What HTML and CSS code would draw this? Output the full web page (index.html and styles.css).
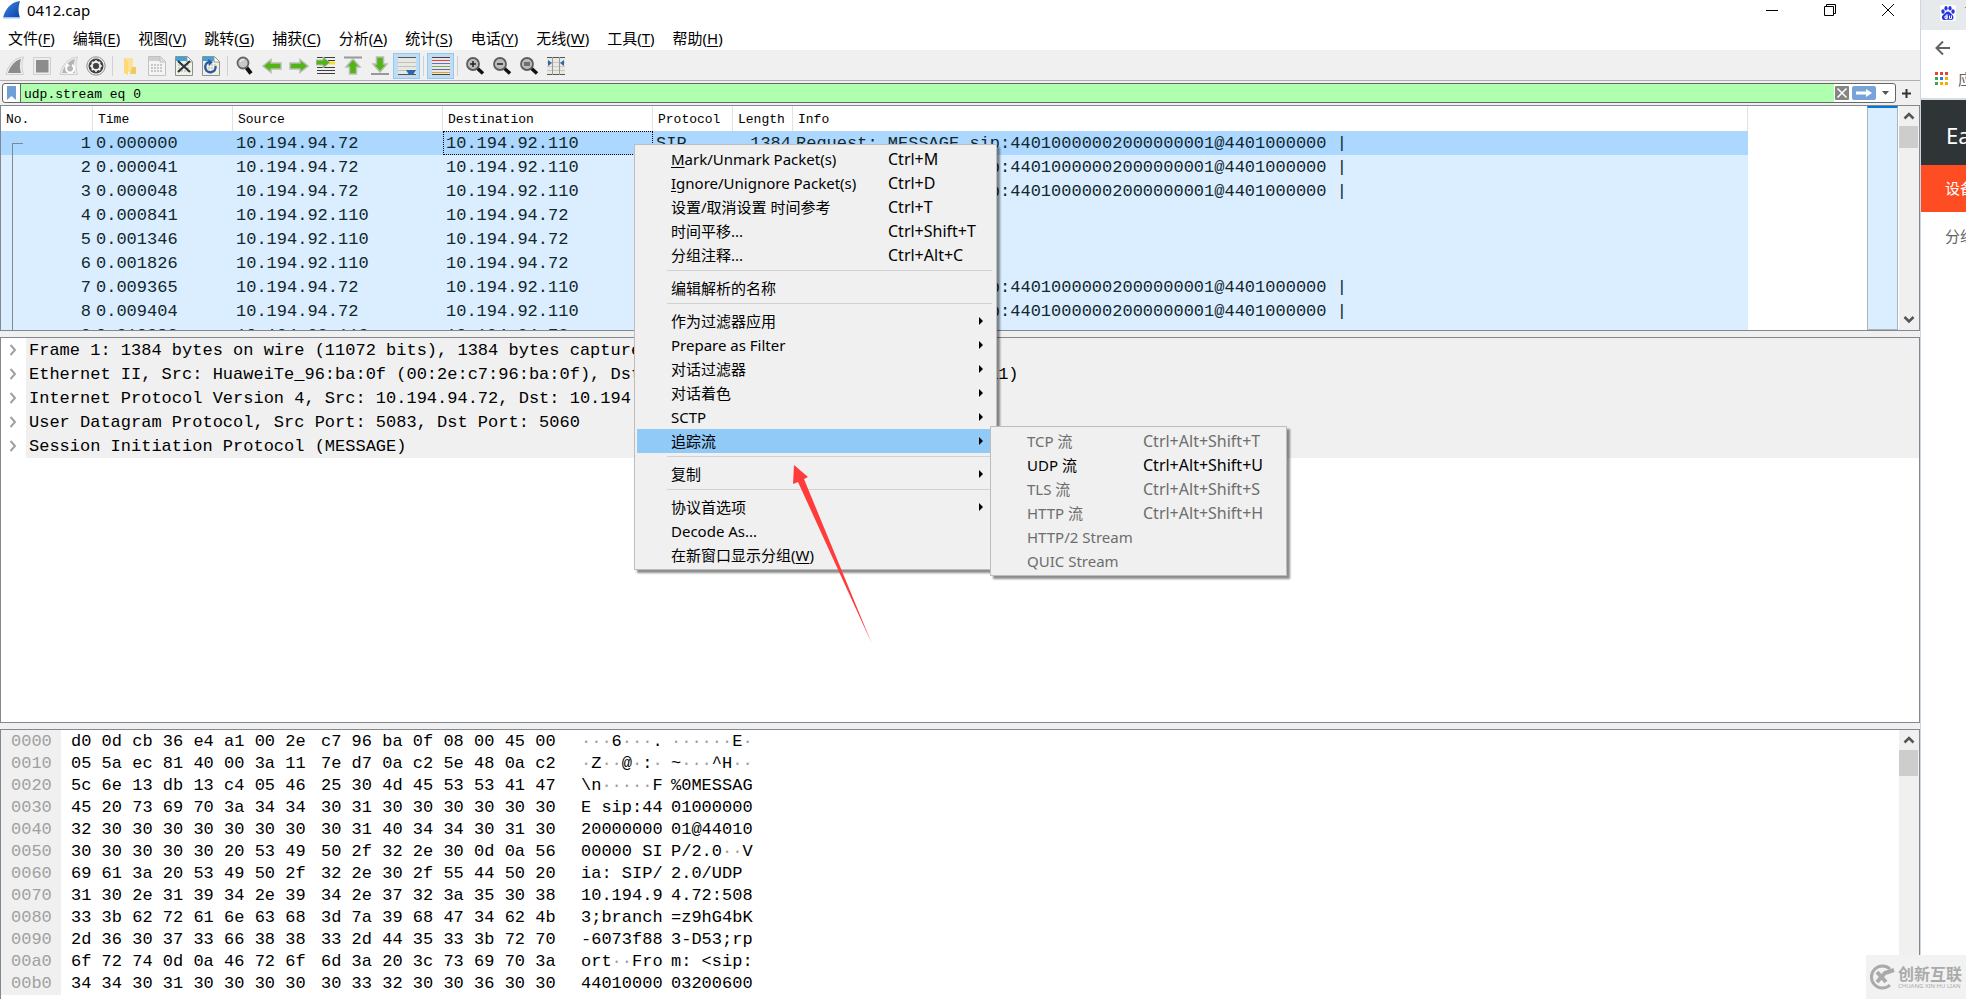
FILE: index.html
```html
<!DOCTYPE html>
<html lang="zh-CN">
<head>
<meta charset="utf-8">
<title>0412.cap</title>
<link rel="stylesheet" href="styles.css">
</head>
<body>
<main class="app">
  <header class="titlebar">
    <svg class="app-icon" width="20" height="20" viewBox="0 0 20 20" aria-hidden="true"><defs><linearGradient id="fin" x1="0" y1="0" x2="1" y2="1"><stop offset="0" stop-color="#3f8be8"/><stop offset="1" stop-color="#0a3fa6"/></linearGradient></defs><path d="M1 18C3 9 9 2 18 1c-2 6-2 11 0 17z" fill="url(#fin)"/><path d="M1 17h17v1.500H1z" fill="#9cc3f5"/></svg>
    <h1 class="title">0412.cap</h1>
    <div class="window-buttons">
      <button aria-label="最小化"><svg width="14" height="14" viewBox="0 0 14 14"><path d="M1 7.500h12" stroke="#000" fill="none"/></svg></button>
      <button aria-label="还原"><svg width="14" height="14" viewBox="0 0 14 14"><path d="M1.500 3.500h9v9h-9zM3.500 3V1.500h9v9H11" stroke="#000" fill="none"/></svg></button>
      <button aria-label="关闭"><svg width="14" height="14" viewBox="0 0 14 14"><path d="M1 1l12 12M13 1L1 13" stroke="#000" fill="none"/></svg></button>
    </div>
  </header>
  <nav class="menubar">
    <button>文件(<u>F</u>)</button><button>编辑(<u>E</u>)</button><button>视图(<u>V</u>)</button><button>跳转(<u>G</u>)</button><button>捕获(<u>C</u>)</button><button>分析(<u>A</u>)</button><button>统计(<u>S</u>)</button><button>电话(<u>Y</u>)</button><button>无线(<u>W</u>)</button><button>工具(<u>T</u>)</button><button>帮助(<u>H</u>)</button>
  </nav>
  <div class="toolbar">
    <button aria-label="开始捕获"><svg width="20" height="20" viewBox="0 0 20 20"><path d="M1 18.500C3 9 9 2 18.500 1c-2 6-2 11 0 17.500z" fill="#eee" stroke="#cfcfcf"/><path d="M3 17C5 10 10 4.500 16 3c-1.500 5-1.500 9 0 14z" fill="#8c8c8c"/></svg></button>
    <button aria-label="停止捕获"><svg width="20" height="20" viewBox="0 0 20 20"><path d="M1.500 1.500h17v17h-17z" fill="#eee" stroke="#cfcfcf"/><path d="M4 4h12.500v12.500H4z" fill="#8c8c8c"/></svg></button>
    <button aria-label="重新捕获"><svg width="20" height="20" viewBox="0 0 20 20"><path d="M1 18.500C3 9 9 2 18.500 1c-2 6-2 11 0 17.500z" fill="#eee" stroke="#cfcfcf"/><path d="M3 17C5 10 10 4.500 16 3c-1.500 5-1.500 9 0 14z" fill="#b5b5b5"/><path d="M8 10a4 4 0 1 0 5-1" fill="none" stroke="#fff" stroke-width="2"/><path d="M6 11l2-4 3 3z" fill="#fff"/></svg></button>
    <button aria-label="捕获选项"><svg width="20" height="20" viewBox="0 0 20 20"><circle cx="10" cy="10" r="9.200" fill="#eee" stroke="#8f8f8f"/><circle cx="10" cy="10" r="7.500" fill="#404040"/><circle cx="10" cy="10" r="4.200" fill="none" stroke="#eee" stroke-width="1.800"/><path d="M10 4v12M4 10h12M5.800 5.800l8.400 8.400M14.200 5.800l-8.400 8.400" stroke="#eee" stroke-width="1.500"/><circle cx="10" cy="10" r="3" fill="#404040"/></svg></button>
    <span class="sep"></span>
    <button aria-label="打开"><svg width="20" height="20" viewBox="0 0 20 20"><path d="M4 2h9v14H4z" fill="#fbe29b"/><path d="M12 11h4v7h-6z" fill="#f2c95c"/><path d="M4 2l4 3v14l-4-2z" fill="#ffd978"/></svg></button>
    <button aria-label="保存"><svg width="20" height="20" viewBox="0 0 20 20"><path d="M1.500.500h12l5 5v14h-17z" fill="#f4f4f4" stroke="#c2c2c2"/><path d="M2 1h11v4H2z" fill="#cfcfcf"/><path d="M13 1v5h5" fill="#ddd" stroke="#c2c2c2"/><path d="M4 9h12M4 12h12M4 15h12" stroke="#c8c8c8" stroke-width="2" stroke-dasharray="2 1"/></svg></button>
    <button aria-label="关闭文件"><svg width="20" height="20" viewBox="0 0 20 20"><path d="M1.500.500h12l5 5v14h-17z" fill="#f0f1e6" stroke="#8f918c"/><path d="M2 1h11v4H2z" fill="#3aa4dc"/><path d="M13 1v5h5" fill="#fff" stroke="#9a9a9a"/><path d="M4 9h12M4 12h12M4 15h12" stroke="#c4c7bb" stroke-width="1.500" stroke-dasharray="2 1"/><path d="M4 5l12 11M16 5L4 16" stroke="#2d333b" stroke-width="2.200"/></svg></button>
    <button aria-label="重新加载"><svg width="20" height="20" viewBox="0 0 20 20"><path d="M1.500.500h12l5 5v14h-17z" fill="#f0f1e6" stroke="#8f918c"/><path d="M2 1h11v4H2z" fill="#3aa4dc"/><path d="M13 1v5h5" fill="#fff" stroke="#9a9a9a"/><path d="M4 9h12M4 12h12M4 15h12" stroke="#c4c7bb" stroke-width="1.500" stroke-dasharray="2 1"/><path d="M8 6a5.200 5.200 0 1 0 6.500 4" fill="none" stroke="#2c5aa0" stroke-width="2.400"/><path d="M7 3l5 3-4 4z" fill="#2c5aa0"/></svg></button>
    <span class="sep"></span>
    <button aria-label="查找"><svg width="20" height="20" viewBox="0 0 20 20"><path d="M11 11l5 6.500" stroke="#111" stroke-width="4"/><circle cx="8" cy="7" r="5.500" fill="#c9c9c9" stroke="#666" stroke-width="1.800"/><path d="M5 6a3.500 3.500 0 0 1 4-2.500" stroke="#fff" fill="none"/></svg></button>
    <button aria-label="上一分组"><svg width="20" height="20" viewBox="0 0 20 20"><path d="M1 10l8-6.500V7h10v6H9v3.500z" fill="#52b515" stroke="#b9bdb5" stroke-width="1.500"/></svg></button>
    <button aria-label="下一分组"><svg width="20" height="20" viewBox="0 0 20 20"><path d="M19 10l-8-6.500V7H1v6h10v3.500z" fill="#52b515" stroke="#b9bdb5" stroke-width="1.500"/></svg></button>
    <button aria-label="转到分组"><svg width="20" height="20" viewBox="0 0 20 20"><path d="M1 1.500h18M1 11.500h18M1 14.500h18M1 17.500h18M12 4.500h7" stroke="#3d3d3d"/><path d="M13 7h6" stroke="#f4e02c" stroke-width="3"/><path d="M14 6.500l-7-5.500v3H0v5h7v3z" fill="#52b515" stroke="#b9bdb5"/></svg></button>
    <button aria-label="首个分组"><svg width="20" height="20" viewBox="0 0 20 20"><path d="M1 1.500h18" stroke="#999" stroke-width="2"/><path d="M10 3l7 8h-3.500v7h-7v-7H3z" fill="#52b515" stroke="#b9bdb5" stroke-width="1.500"/></svg></button>
    <button aria-label="最新分组"><svg width="20" height="20" viewBox="0 0 20 20"><path d="M1 18h18" stroke="#999" stroke-width="2"/><path d="M10 16l7-8h-3.500V1h-7v7H3z" fill="#52b515" stroke="#b9bdb5" stroke-width="1.500"/></svg></button>
    <button class="on" aria-pressed="true" aria-label="自动滚动"><svg width="20" height="20" viewBox="0 0 20 20"><path d="M1 2h18v16H1z" fill="#e6e8e4"/><path d="M1 1.500h18M1 18.500h18" stroke="#555"/><path d="M1 6.500h18M1 10.500h18M1 14.500h18" stroke="#c2c2ba"/><path d="M9 14h10l-2.500 4h-5z" fill="#2c66ac"/></svg></button>
    <span class="sep"></span>
    <button class="on" aria-pressed="true" aria-label="着色"><svg width="20" height="20" viewBox="0 0 20 20"><path d="M1 1h18v18H1z" fill="#e8e8e8"/><path d="M1 1.500h18" stroke="#444"/><path d="M1 4.500h18" stroke="#ef3d3d"/><path d="M1 7.500h18" stroke="#4a7fc1"/><path d="M1 10.500h18" stroke="#6fb04b"/><path d="M1 13.500h18" stroke="#7a5aa8"/><path d="M1 16.500h18" stroke="#d3a928"/><path d="M1 18.500h18" stroke="#444"/></svg></button>
    <span class="sep"></span>
    <button aria-label="放大"><svg width="20" height="20" viewBox="0 0 20 20"><path d="M12 12l6 5.500" stroke="#111" stroke-width="3.500"/><circle cx="8" cy="8" r="6" fill="#bdbdbd" stroke="#5d5d5d" stroke-width="1.800"/><path d="M5 8h6M8 5v6" stroke="#222" stroke-width="1.500"/></svg></button>
    <button aria-label="缩小"><svg width="20" height="20" viewBox="0 0 20 20"><path d="M12 12l6 5.500" stroke="#111" stroke-width="3.500"/><circle cx="8" cy="8" r="6" fill="#bdbdbd" stroke="#5d5d5d" stroke-width="1.800"/><path d="M5 8h6" stroke="#222" stroke-width="1.500"/></svg></button>
    <button aria-label="原始大小"><svg width="20" height="20" viewBox="0 0 20 20"><path d="M12 12l6 5.500" stroke="#111" stroke-width="3.500"/><circle cx="8" cy="8" r="6" fill="#bdbdbd" stroke="#5d5d5d" stroke-width="1.800"/><path d="M5 7h6M5 9h6" stroke="#222" stroke-width="1.200"/></svg></button>
    <button aria-label="调整列宽"><svg width="20" height="20" viewBox="0 0 20 20"><path d="M1 1h18v18H1z" fill="#e9e9e2"/><path d="M1 1.500h18M1 18.500h18" stroke="#555"/><path d="M1 6.500h18M1 10.500h18M1 14.500h18" stroke="#c9c9c0"/><path d="M6.500 1v18M13.500 1v18" stroke="#9a9a9a"/><path d="M2 4l4 3-4 3zM18 4l-4 3 4 3z" fill="#2c66ac"/></svg></button>
  </div>
  <div class="filterbar">
    <div class="filter">
      <button class="bookmark" aria-label="书签"><svg width="10" height="14" viewBox="0 0 10 14"><path d="M0 0h9v14L4.500 10 0 14z" fill="#6f9fd6"/></svg></button>
      <input class="filter-input" type="text" aria-label="显示过滤器" value="udp.stream eq 0" spellcheck="false">
      <button class="clear" aria-label="清除"><svg width="14" height="14" viewBox="0 0 14 14"><rect width="14" height="14" rx="1" fill="#858585"/><path d="M2.500 2.500l9 9M11.500 2.500l-9 9" stroke="#fff" stroke-width="1.500"/></svg></button>
      <button class="apply" aria-label="应用"><svg width="24" height="14" viewBox="0 0 24 14"><rect width="24" height="14" rx="2" fill="#78a3d9"/><path d="M4 5.500h10V3l6 4-6 4V8.500H4z" fill="#fff"/></svg></button>
      <button class="recent" aria-label="最近"><svg width="8" height="4" viewBox="0 0 8 4"><path d="M0 0h7L3.500 4z" fill="#555"/></svg></button>
    </div>
    <button class="plus" aria-label="添加"><svg width="9" height="9" viewBox="0 0 9 9"><path d="M4.500 0v9M0 4.500h9" stroke="#333" stroke-width="2"/></svg></button>
  </div>

  <section class="pane packets" aria-label="分组列表">
    <div class="packet-scroll">
      <table class="packet-table">
        <colgroup><col class="c-no"><col class="c-time"><col class="c-addr"><col class="c-addr"><col class="c-proto"><col class="c-len"><col></colgroup>
        <thead><tr><th>No.</th><th>Time</th><th>Source</th><th>Destination</th><th>Protocol</th><th>Length</th><th>Info</th></tr></thead>
        <tbody>
          <tr class="selected"><td>1</td><td>0.000000</td><td>10.194.94.72</td><td class="focus">10.194.92.110</td><td>SIP</td><td>1384</td><td>Request: MESSAGE sip:44010000002000000001@4401000000 |</td></tr>
          <tr><td>2</td><td>0.000041</td><td>10.194.94.72</td><td>10.194.92.110</td><td>SIP</td><td>1384</td><td>Request: MESSAGE sip:44010000002000000001@4401000000 |</td></tr>
          <tr><td>3</td><td>0.000048</td><td>10.194.94.72</td><td>10.194.92.110</td><td>SIP</td><td>1384</td><td>Request: MESSAGE sip:44010000002000000001@4401000000 |</td></tr>
          <tr><td>4</td><td>0.000841</td><td>10.194.92.110</td><td>10.194.94.72</td><td>SIP</td><td>384</td><td>Status: 200 OK |</td></tr>
          <tr><td>5</td><td>0.001346</td><td>10.194.92.110</td><td>10.194.94.72</td><td>SIP</td><td>384</td><td>Status: 200 OK |</td></tr>
          <tr><td>6</td><td>0.001826</td><td>10.194.92.110</td><td>10.194.94.72</td><td>SIP</td><td>384</td><td>Status: 200 OK |</td></tr>
          <tr><td>7</td><td>0.009365</td><td>10.194.94.72</td><td>10.194.92.110</td><td>SIP</td><td>1384</td><td>Request: MESSAGE sip:44010000002000000001@4401000000 |</td></tr>
          <tr><td>8</td><td>0.009404</td><td>10.194.94.72</td><td>10.194.92.110</td><td>SIP</td><td>1384</td><td>Request: MESSAGE sip:44010000002000000001@4401000000 |</td></tr>
          <tr><td>9</td><td>0.010383</td><td>10.194.92.110</td><td>10.194.94.72</td><td>SIP</td><td>384</td><td>Status: 200 OK |</td></tr>
        </tbody>
      </table>
      <span class="stream-line"></span>
    </div>
    <div class="minimap"></div>
    <div class="scrollbar">
      <svg width="20" height="20" viewBox="0 0 20 20"><path d="M5.500 12.500L10 8l4.500 4.500" fill="none" stroke="#555" stroke-width="2.500"/></svg>
      <span class="thumb"></span>
      <svg class="down" width="20" height="20" viewBox="0 0 20 20"><path d="M5.500 7L10 11.500 14.500 7" fill="none" stroke="#555" stroke-width="2.500"/></svg>
    </div>
  </section>

  <section class="pane details" aria-label="分组详情">
    <ul class="tree">
      <li><svg class="chev" width="8" height="12" viewBox="0 0 8 12"><path d="M1.500 1L6 6l-4.500 5" fill="none" stroke="#a0a0a0" stroke-width="2"/></svg><span>Frame 1: 1384 bytes on wire (11072 bits), 1384 bytes captured</span></li>
      <li><svg class="chev" width="8" height="12" viewBox="0 0 8 12"><path d="M1.500 1L6 6l-4.500 5" fill="none" stroke="#a0a0a0" stroke-width="2"/></svg><span>Ethernet II, Src: HuaweiTe_96:ba:0f (00:2e:c7:96:ba:0f), Dst: Huawei_36:e4:a1 (d0:0d:cb:36:e4:a1)</span></li>
      <li><svg class="chev" width="8" height="12" viewBox="0 0 8 12"><path d="M1.500 1L6 6l-4.500 5" fill="none" stroke="#a0a0a0" stroke-width="2"/></svg><span>Internet Protocol Version 4, Src: 10.194.94.72, Dst: 10.194.92.110</span></li>
      <li><svg class="chev" width="8" height="12" viewBox="0 0 8 12"><path d="M1.500 1L6 6l-4.500 5" fill="none" stroke="#a0a0a0" stroke-width="2"/></svg><span>User Datagram Protocol, Src Port: 5083, Dst Port: 5060</span></li>
      <li><svg class="chev" width="8" height="12" viewBox="0 0 8 12"><path d="M1.500 1L6 6l-4.500 5" fill="none" stroke="#a0a0a0" stroke-width="2"/></svg><span>Session Initiation Protocol (MESSAGE)</span></li>
    </ul>
  </section>

  <section class="pane bytes" aria-label="分组字节">
    <table class="hex">
      <colgroup><col class="h-off"><col class="h-first"><col class="h-second"><col class="h-ascii"><col></colgroup>
      <tbody>
        <tr><th>0000</th><td>d0 0d cb 36 e4 a1 00 2e</td><td>c7 96 ba 0f 08 00 45 00</td><td><i>···</i>6<i>···</i>.</td><td><i>······</i>E<i>·</i></td></tr>
        <tr><th>0010</th><td>05 5a ec 81 40 00 3a 11</td><td>7e d7 0a c2 5e 48 0a c2</td><td><i>·</i>Z<i>··</i>@<i>·</i>:<i>·</i></td><td>~<i>···</i>^H<i>··</i></td></tr>
        <tr><th>0020</th><td>5c 6e 13 db 13 c4 05 46</td><td>25 30 4d 45 53 53 41 47</td><td>\n<i>·····</i>F</td><td>%0MESSAG</td></tr>
        <tr><th>0030</th><td>45 20 73 69 70 3a 34 34</td><td>30 31 30 30 30 30 30 30</td><td>E sip:44</td><td>01000000</td></tr>
        <tr><th>0040</th><td>32 30 30 30 30 30 30 30</td><td>30 31 40 34 34 30 31 30</td><td>20000000</td><td>01@44010</td></tr>
        <tr><th>0050</th><td>30 30 30 30 30 20 53 49</td><td>50 2f 32 2e 30 0d 0a 56</td><td>00000 SI</td><td>P/2.0<i>··</i>V</td></tr>
        <tr><th>0060</th><td>69 61 3a 20 53 49 50 2f</td><td>32 2e 30 2f 55 44 50 20</td><td>ia: SIP/</td><td>2.0/UDP </td></tr>
        <tr><th>0070</th><td>31 30 2e 31 39 34 2e 39</td><td>34 2e 37 32 3a 35 30 38</td><td>10.194.9</td><td>4.72:508</td></tr>
        <tr><th>0080</th><td>33 3b 62 72 61 6e 63 68</td><td>3d 7a 39 68 47 34 62 4b</td><td>3;branch</td><td>=z9hG4bK</td></tr>
        <tr><th>0090</th><td>2d 36 30 37 33 66 38 38</td><td>33 2d 44 35 33 3b 72 70</td><td>-6073f88</td><td>3-D53;rp</td></tr>
        <tr><th>00a0</th><td>6f 72 74 0d 0a 46 72 6f</td><td>6d 3a 20 3c 73 69 70 3a</td><td>ort<i>··</i>Fro</td><td>m: &lt;sip:</td></tr>
        <tr><th>00b0</th><td>34 34 30 31 30 30 30 30</td><td>30 33 32 30 30 36 30 30</td><td>44010000</td><td>03200600</td></tr>
      </tbody>
    </table>
    <div class="scrollbar">
      <svg width="20" height="20" viewBox="0 0 20 20"><path d="M5.500 12.500L10 8l4.500 4.500" fill="none" stroke="#555" stroke-width="2.500"/></svg>
      <span class="thumb thumb-long"></span>
    </div>
  </section>
</main>

<aside class="browser" aria-label="浏览器">
  <div class="tab">
    <svg width="16" height="16" viewBox="0 0 16 16"><rect width="16" height="16" rx="2" fill="#fff"/><g fill="#2932e1"><ellipse cx="3" cy="6.500" rx="1.700" ry="2.200"/><ellipse cx="6" cy="3.200" rx="1.600" ry="2.200"/><ellipse cx="10" cy="3.200" rx="1.600" ry="2.200"/><ellipse cx="13" cy="6.500" rx="1.700" ry="2.200"/><path d="M8 6.500c2 0 2.500 2 4.500 3.500 1.500 1.500 1.500 5-1.500 5-2 0-4-.500-6 0-3 .500-4-3-2-5C5 8.500 6 6.500 8 6.500z"/></g><path d="M5 11h2v2.500H5zM7 9v4.500M9.500 10.500v3h2v-3" fill="none" stroke="#fff"/></svg>
    <span class="tab-title">百度</span>
  </div>
  <div class="nav"><button aria-label="返回"><svg width="16" height="16" viewBox="0 0 16 16"><path d="M15 8H2M8 1.500L1.500 8 8 14.500" fill="none" stroke="#5f6368" stroke-width="2"/></svg></button></div>
  <div class="bookmarks">
    <svg width="14" height="14" viewBox="0 0 14 14"><path d="M0 0h3v3H0zM5 0h3v3H5zM10 0h3v3h-3z" fill="#ea4335"/><path d="M0 5h3v3H0zM0 10h3v3H0z" fill="#34a853"/><path d="M5 5h3v3H5z" fill="#1a82f0"/><path d="M10 5h3v3h-3zM5 10h3v3H5zM10 10h3v3h-3z" fill="#f9ab00"/></svg>
    <span>应用</span>
  </div>
  <div class="site-name">Easy</div>
  <div class="site-active">设备</div>
  <div class="site-item">分组</div>
</aside>

<div class="menu context" role="menu">
  <button role="menuitem"><span><u>M</u>ark/Unmark Packet(s)</span><kbd>Ctrl+M</kbd></button>
  <button role="menuitem"><span><u>I</u>gnore/Unignore Packet(s)</span><kbd>Ctrl+D</kbd></button>
  <button role="menuitem"><span>设置/取消设置 时间参考</span><kbd>Ctrl+T</kbd></button>
  <button role="menuitem"><span>时间平移...</span><kbd>Ctrl+Shift+T</kbd></button>
  <button role="menuitem"><span>分组注释...</span><kbd>Ctrl+Alt+C</kbd></button>
  <hr>
  <button role="menuitem"><span>编辑解析的名称</span></button>
  <hr>
  <button role="menuitem" class="sub"><span>作为过滤器应用</span></button>
  <button role="menuitem" class="sub"><span>Prepare as Filter</span></button>
  <button role="menuitem" class="sub"><span>对话过滤器</span></button>
  <button role="menuitem" class="sub"><span>对话着色</span></button>
  <button role="menuitem" class="sub"><span>SCTP</span></button>
  <button role="menuitem" class="sub active"><span>追踪流</span></button>
  <hr>
  <button role="menuitem" class="sub"><span>复制</span></button>
  <hr>
  <button role="menuitem" class="sub"><span>协议首选项</span></button>
  <button role="menuitem"><span>Decode As...</span></button>
  <button role="menuitem"><span>在新窗口显示分组(<u>W</u>)</span></button>
</div>
<div class="menu submenu" role="menu">
  <button role="menuitem" disabled><span>TCP 流</span><kbd>Ctrl+Alt+Shift+T</kbd></button>
  <button role="menuitem"><span>UDP 流</span><kbd>Ctrl+Alt+Shift+U</kbd></button>
  <button role="menuitem" disabled><span>TLS 流</span><kbd>Ctrl+Alt+Shift+S</kbd></button>
  <button role="menuitem" disabled><span>HTTP 流</span><kbd>Ctrl+Alt+Shift+H</kbd></button>
  <button role="menuitem" disabled><span>HTTP/2 Stream</span></button>
  <button role="menuitem" disabled><span>QUIC Stream</span></button>
</div>
<svg class="pointer" width="80" height="181" viewBox="0 0 80 181" aria-hidden="true"><path d="M1 0L15 12l-4 2L79 179 5 17l-5 2z" fill="#ff3b3b"/></svg>
<div class="watermark">
  <svg width="26" height="26" viewBox="0 0 26 26" aria-hidden="true"><path d="M21 5A11 11 0 1 0 21 21" fill="none" stroke="#aaa" stroke-width="3"/><path d="M8 8l9 10M8 18l8-9 9-3" fill="none" stroke="#aaa" stroke-width="4"/></svg>
  <div class="mark-text"><strong>创新互联</strong><small>CHUANG XIN HU LIAN</small></div>
</div>
</body>
</html>
```
FILE: styles.css
```css
* { box-sizing: border-box; }
:root {
  --ui: "Noto Sans", "Noto Sans CJK SC", sans-serif;
  --mono: "Liberation Mono", "Noto Sans CJK SC", monospace;
  --edge: #828790;
}
body {
  margin: 0;
  height: 100vh;
  overflow: hidden;
  display: flex;
  position: relative;
  background: #fff;
  color: #000;
  font: 15px/24px var(--ui);
}
button { border: 0; padding: 0; background: none; color: inherit; font: inherit; }
svg { display: block; flex: none; }
u { text-underline-offset: 2px; }

.app { flex: 1; min-width: 0; display: flex; flex-direction: column; background: #f0f0f0; }
.titlebar { height: 24px; display: flex; align-items: center; padding: 0 25px 4px 2px; background: #fff; }
.title { margin: 0 0 0 5px; font-weight: 400; font-size: 15px; line-height: 20px; }
.window-buttons { margin-left: auto; display: flex; gap: 44px; }

.menubar { display: flex; gap: 18px; height: 27px; padding: 2px 8px 0; background: #fff; border-bottom: 1px solid #f0f0f0; }
.menubar button { white-space: nowrap; }

.toolbar { display: flex; align-items: center; height: 30px; padding-left: 1px; border-bottom: 1px solid #b0b0b0; }
.toolbar button { width: 27px; height: 26px; display: grid; place-items: center; }
.toolbar .on { background: #c0dcf3; border: 1px solid #90c8f6; }
.sep { width: 1px; height: 20px; margin: 0 3px; background: #d0d0d0; }

.filterbar { display: flex; align-items: center; height: 24px; padding: 0 9px 0 2px; gap: 6px; }
.filter { flex: 1; display: flex; align-items: center; height: 20px; border: 1px solid #666; border-radius: 3px; background: #fff; }
.bookmark { width: 17px; display: grid; place-items: center; }
.filter-input { flex: 1; min-width: 0; height: 18px; border: 0; border-left: 1px solid #666; padding: 2px 3px 0; background: #afffaf; font: 13px/16px var(--mono); outline: 0; }
.clear { margin: 0 3px 0 1px; }
.recent { width: 19px; display: grid; place-items: center; }

.pane { display: flex; overflow: hidden; min-height: 0; background: #fff; border: 1px solid var(--edge); }
.packets { flex: 226 1 0; margin-bottom: 6px; }
.details { flex: 387 1 0; margin-bottom: 6px; }
.bytes { flex: 271 1 0; border-bottom: 0; }

.packet-scroll { flex: 1; min-width: 0; margin-right: 119px; position: relative; overflow: hidden; }
.packet-table { width: 100%; border-collapse: separate; border-spacing: 0; table-layout: fixed; font: 17px/22px var(--mono); color: #12272e; }
.packet-table th { height: 25px; padding: 2px 5px 0; text-align: left; font: 13px/22px var(--mono); color: #000; background: #fff; border-right: 1px solid #e2e2e2; }
.packet-table td { height: 24px; padding: 2px 4px 0 3px; white-space: nowrap; background: #daeeff; overflow: hidden; }
.packet-table td:nth-child(1), .packet-table td:nth-child(6) { text-align: right; padding-right: 2px; }
.packet-table .selected td { background: #acd8ff; }
.packet-table .focus { outline: 1px dotted #000; outline-offset: -1px; }
.c-no { width: 92px; }
.c-time { width: 140px; }
.c-addr { width: 210px; }
.c-proto { width: 80px; }
.c-len { width: 60px; }
.stream-line { position: absolute; left: 11px; top: 37px; bottom: 0; width: 11px; border: solid #7d8a94; border-width: 1px 0 0 1px; }

.minimap { width: 31px; background: #daeeff; border: 1px solid #aab4bc; border-top: 2px solid #0078d7; }
.scrollbar { width: 21px; display: flex; flex-direction: column; background: #f0f0f0; border-left: 1px solid #fff; }
.thumb { height: 22px; margin-right: 1px; background: #cdcdcd; }
.thumb-long { height: 26px; }
.down { margin-top: auto; }

.tree { flex: 1; min-width: 0; list-style: none; margin: 0; padding: 0; font: 17px/22px var(--mono); }
.tree li { display: flex; align-items: center; white-space: nowrap; }
.tree span { flex: 1; padding: 2px 0 0 3px; background: #f0f0f0; }
.chev { margin: 0 9px 0 8px; }

.hex { border-collapse: collapse; table-layout: fixed; width: 766px; margin-right: auto; align-self: flex-start; font: 17px/22px var(--mono); }
.hex th, .hex td { padding: 0 0 0 10px; height: 22px; white-space: pre; text-align: left; font-weight: 400; }
.hex th { color: #a0a0a0; background: #f0f0f0; }
.hex tr:first-child > * { padding-top: 1px; }
.hex i { font-style: normal; color: #a0a0a0; }
.h-off { width: 60px; }
.h-first { width: 250px; }
.h-second { width: 260px; }
.h-ascii { width: 90px; }

.browser { flex: 0 0 46px; overflow: hidden; background: #fff; border-left: 1px solid #ccd6e4; white-space: nowrap; }
.tab { display: flex; align-items: center; gap: 8px; height: 30px; padding: 0 0 4px 19px; background: #e7eaed; }
.tab-title { color: #b08050; }
.nav { display: flex; align-items: center; height: 36px; padding-left: 14px; }
.bookmarks { display: flex; align-items: center; gap: 9px; height: 34px; padding: 0 0 6px 14px; border-bottom: 2px solid #d8dde0; color: #5f6368; }
.site-name { height: 65px; padding-left: 25px; background: #2f3437; color: #fff; font-size: 22px; line-height: 70px; }
.site-active { height: 47px; padding-left: 24px; background: #ff4d23; color: #fff; line-height: 47px; }
.site-item { height: 48px; padding-left: 24px; color: #606266; line-height: 48px; }

.menu { position: absolute; display: flex; flex-direction: column; padding: 2px; background: #f0f0f0; border: 1px solid #bdbdbd; box-shadow: 3px 3px 2px rgba(0, 0, 0, .45); }
.menu button { display: grid; align-items: center; height: 24px; text-align: left; white-space: nowrap; position: relative; }
.menu kbd { font: 16px/24px var(--ui); }
.menu button:disabled { color: #6d6d6d; }
.menu hr { width: auto; height: 1px; margin: 3px 2px 5px 30px; border: 0; background: #d2d2d2; }
.context { left: 634px; top: 144px; width: 363px; }
.context button { grid-template-columns: 217px 1fr; padding-left: 34px; }
.submenu { left: 990px; top: 426px; width: 297px; }
.submenu button { grid-template-columns: 116px 1fr; padding-left: 34px; }
.sub::after { content: ""; position: absolute; right: 11px; top: 8px; border: solid transparent; border-width: 4px 0 4px 4px; border-left-color: #000; }
.active { background: #91c9f7; }

.pointer { position: absolute; left: 793px; top: 465px; }
.watermark { position: absolute; right: 0; bottom: 0; width: 100px; height: 44px; display: flex; align-items: center; gap: 3px; padding-left: 3px; background: #f2f2f2; color: #aaa; }
.mark-text { display: flex; flex-direction: column; white-space: nowrap; }
.mark-text strong { font-size: 16px; line-height: 18px; }
.mark-text small { font-size: 6px; line-height: 7px; }
```
